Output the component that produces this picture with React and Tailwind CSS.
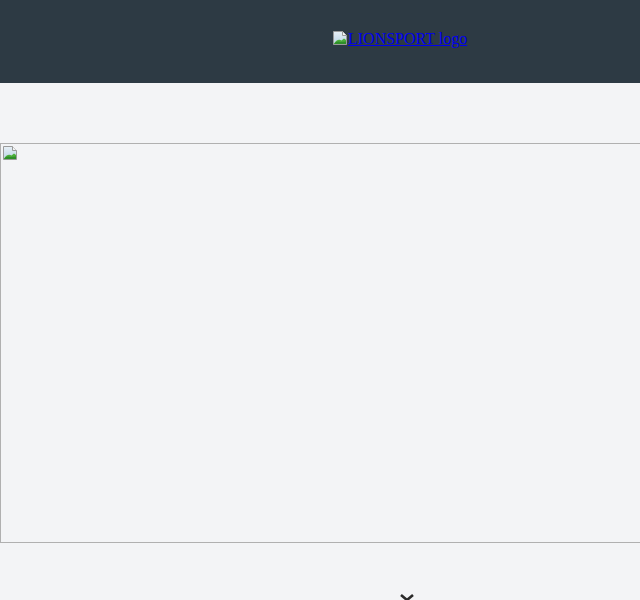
import React from "react";

function BrokenIcon() {
  return (
    <svg width="16" height="16" viewBox="0 0 16 16" className="shrink-0">
      <defs>
        <linearGradient id="sky" x1="0" y1="0" x2="0" y2="1">
          <stop offset="0" stopColor="#e8f0f6" />
          <stop offset="1" stopColor="#b9d3e6" />
        </linearGradient>
      </defs>
      <path d="M1.5 1.5 H10.5 L14.5 5.5 V14.5 H1.5 Z" fill="url(#sky)" stroke="#9a9a9a" />
      <path d="M10.5 1.5 V5.5 H14.5" fill="#f4f4f4" stroke="#9a9a9a" />
      <path d="M2 14 C4 10 7 9 9.5 10.5 L12 8.5 L14 10 V14 Z" fill="#4caf3a" />
      <path d="M2 14 C4 11.5 6 11 8 12 L14 11.5 V14 Z" fill="#2f8f2a" />
    </svg>
  );
}

export default function App() {
  return (
    <div className="min-h-[600px] w-[640px] overflow-hidden bg-[#f3f4f6] font-['Liberation_Serif',serif]">
      <header className="h-[83px] bg-[#2d3a44] pl-[332px] pt-[29px]">
        <a href="#" className="inline-flex items-end text-[16px] leading-[18px] text-[#0000ee] underline">
          <span className="mb-[2px]"><BrokenIcon /></span>
          <span>LIONSPORT logo</span>
        </a>
      </header>
      <div className="pt-[60px]">
        <div className="h-[400px] w-[680px] border border-[#b0b0b0] p-px">
          <BrokenIcon />
        </div>
      </div>
      <div className="flex pl-[399px] pt-[50px]">
        <svg width="16" height="10" viewBox="0 0 16 10">
          <path d="M2 2 L8 7 L14 2" fill="none" stroke="#2a2a2a" strokeWidth="2.6" />
        </svg>
      </div>
    </div>
  );
}
